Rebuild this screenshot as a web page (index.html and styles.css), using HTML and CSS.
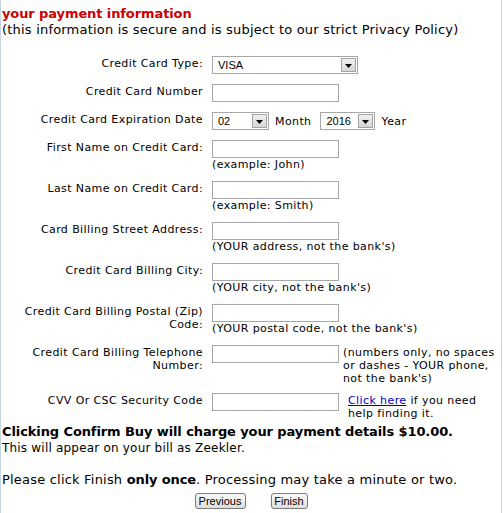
FILE: index.html
```html
<!DOCTYPE html>
<html>
<head>
<meta charset="utf-8">
<link rel="stylesheet" href="styles.css">
</head>
<body>
<div class="page">
  <h2 class="title">your payment information</h2>
  <p class="sub">(this information is secure and is subject to our strict Privacy Policy)</p>

  <div class="form">
    <div class="row">
      <div class="label">Credit Card Type:</div>
      <div class="field span">
        <span class="select s-type"><span class="val">VISA</span><span class="arrow"><svg width="7" height="4" viewBox="0 0 7 4"><path d="M0 0h7L3.5 4z" fill="#000"/></svg></span></span>
      </div>
    </div>

    <div class="row">
      <div class="label">Credit Card Number</div>
      <div class="field"><span class="input"></span></div>
    </div>

    <div class="row">
      <div class="label">Credit Card Expiration Date</div>
      <div class="field span inline">
        <span class="select s-month"><span class="val">02</span><span class="arrow"><svg width="7" height="4" viewBox="0 0 7 4"><path d="M0 0h7L3.5 4z" fill="#000"/></svg></span></span>
        <span class="unit unit-month">Month</span>
        <span class="select s-year"><span class="val">2016</span><span class="arrow"><svg width="7" height="4" viewBox="0 0 7 4"><path d="M0 0h7L3.5 4z" fill="#000"/></svg></span></span>
        <span class="unit">Year</span>
      </div>
    </div>

    <div class="row">
      <div class="label">First Name on Credit Card:</div>
      <div class="field span"><span class="input"></span><span class="note">(example: John)</span></div>
    </div>

    <div class="row">
      <div class="label">Last Name on Credit Card:</div>
      <div class="field span"><span class="input"></span><span class="note">(example: Smith)</span></div>
    </div>

    <div class="row">
      <div class="label">Card Billing Street Address:</div>
      <div class="field span"><span class="input"></span><span class="note">(YOUR address, not the bank's)</span></div>
    </div>

    <div class="row">
      <div class="label">Credit Card Billing City:</div>
      <div class="field span"><span class="input"></span><span class="note">(YOUR city, not the bank's)</span></div>
    </div>

    <div class="row">
      <div class="label">Credit Card Billing Postal (Zip)<br>Code:</div>
      <div class="field span"><span class="input"></span><span class="note">(YOUR postal code, not the bank's)</span></div>
    </div>

    <div class="row row-tight">
      <div class="label">Credit Card Billing Telephone<br>Number:</div>
      <div class="field"><span class="input"></span></div>
      <div class="side">(numbers only, no spaces<br>or dashes - YOUR phone,<br>not the bank's)</div>
    </div>

    <div class="row">
      <div class="label">CVV Or CSC Security Code</div>
      <div class="field"><span class="input"></span></div>
      <div class="side side-cvv"><a href="#" class="link">Click here</a> if you need<br>help finding it.</div>
    </div>
  </div>

  <div class="charge">
    <p class="strong-line">Clicking Confirm Buy will charge your payment details $10.00.</p>
    <p class="small-line">This will appear on your bill as Zeekler.</p>
    <p class="finish-line">Please click Finish <b>only once</b>. Processing may take a minute or two.</p>
  </div>

  <div class="buttons">
    <span class="btn btn-prev">Previous</span>
    <span class="btn btn-finish">Finish</span>
  </div>
</div>
</body>
</html>
```

FILE: styles.css
```css
html, body {
  margin: 0;
  padding: 0;
  background: #fff;
}

body {
  font-family: "DejaVu Sans", Verdana, sans-serif;
  color: #000;
}

.page {
  box-sizing: border-box;
  width: 502px;
  min-height: 513px;
  border-left: 1px solid #c6d3e2;
  border-right: 1px solid #c6d3e2;
  padding: 6px 0 0 1px;
}

.title {
  margin: 0;
  font-size: 13px;
  line-height: 16px;
  font-weight: bold;
  letter-spacing: -0.1px;
  color: #cc0000;
}

.sub {
  margin: 0;
  font-size: 13px;
  line-height: 16px;
  letter-spacing: 0.2px;
}

.form {
  display: flex;
  flex-direction: column;
  gap: 10px;
  margin-top: 18px;
  font-size: 11px;
  line-height: 13px;
  letter-spacing: 0.4px;
}

.row {
  display: grid;
  grid-template-columns: 210px 131px 1fr;
  align-items: start;
}

.row-tight {
  margin-bottom: -2px;
}

.label {
  text-align: right;
  padding-right: 9px;
  padding-top: 1px;
}

.field {
  display: flex;
  flex-direction: column;
  align-items: flex-start;
}

.field.span {
  grid-column: 2 / 4;
}

.field.inline {
  flex-direction: row;
  align-items: center;
}

.input {
  display: block;
  box-sizing: border-box;
  width: 127px;
  height: 18px;
  border: 1px solid #a7a7aa;
  background: #fff;
}

.note {
  display: block;
}

.side {
  padding-top: 1px;
  white-space: nowrap;
}

.side-cvv {
  padding-left: 5px;
}

.link {
  color: #0000cc;
  text-decoration: underline;
}

.select {
  display: inline-flex;
  align-items: center;
  justify-content: space-between;
  box-sizing: border-box;
  height: 18px;
  border: 1px solid #a7a7aa;
  background: #fff;
  padding: 1px;
  letter-spacing: 0;
}

.s-type { width: 146px; }
.s-month { width: 57px; }
.s-year { width: 55px; }

.val {
  padding-left: 4px;
  padding-top: 1px;
  font-family: "Liberation Sans", Arial, sans-serif;
  font-size: 11px;
  line-height: 13px;
}

.arrow {
  box-sizing: border-box;
  width: 15px;
  height: 14px;
  border: 1px solid #a4a4a4;
  background: linear-gradient(#f0f0f0, #d6d6d6);
  display: flex;
  align-items: center;
  justify-content: center;
  padding-top: 2px;
}

.arrow svg {
  display: block;
}

.unit {
  margin: 0 7px 0 6px;
}

.unit-month {
  margin-right: 9px;
}

.charge {
  margin-top: 4px;
}

.charge p {
  margin: 0;
}

.strong-line {
  font-size: 13px;
  line-height: 16px;
  font-weight: bold;
  letter-spacing: -0.1px;
}

.small-line {
  font-size: 12px;
  line-height: 16px;
  letter-spacing: 0.2px;
}

.finish-line {
  margin-top: 16px !important;
  font-size: 13px;
  line-height: 16px;
  letter-spacing: 0.2px;
}

.finish-line b {
  letter-spacing: -0.1px;
}

.buttons {
  display: flex;
  justify-content: center;
  gap: 25px;
  margin-top: 5px;
  padding-right: 1px;
}

.btn {
  display: inline-flex;
  align-items: center;
  justify-content: center;
  box-sizing: border-box;
  height: 16px;
  border: 1px solid #7b7b7b;
  border-radius: 3px;
  background: linear-gradient(#fbfbfb, #dedede);
  font-family: "Liberation Sans", Arial, sans-serif;
  font-size: 11px;
  line-height: 13px;
}

.btn-prev { width: 51px; }
.btn-finish { width: 37px; }
```
